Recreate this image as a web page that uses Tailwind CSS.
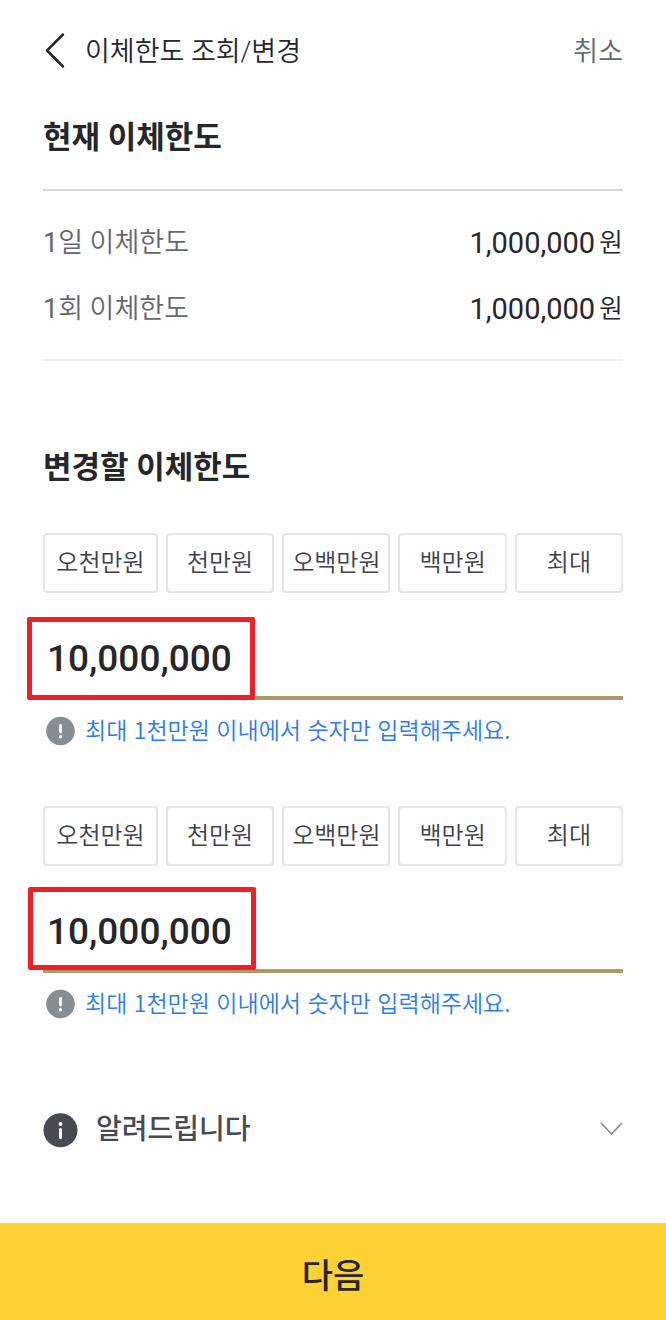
<!DOCTYPE html>
<html lang="ko">
<head>
  <meta charset="UTF-8">
  <meta name="viewport" content="width=device-width, initial-scale=1">
  <title>이체한도 조회/변경</title>
  <script src="https://cdn.jsdelivr.net/npm/@tailwindcss/browser@4"></script>
</head>
<body class="flex min-h-screen flex-col bg-[#fefefe] font-['Roboto','Noto_Sans_CJK_KR',sans-serif] text-[#26272b]">

  <header class="flex items-center justify-between px-[43px] pt-8">
    <div class="flex items-center gap-5">
      <button type="button" aria-label="뒤로">
        <svg class="h-10 w-[22px]" viewBox="0 0 22 40" fill="none" stroke="currentColor" stroke-width="2.500" stroke-linecap="round" stroke-linejoin="round"><path d="M20 2.500L4 18.500L20 34.500"/></svg>
      </button>
      <h1 class="text-[27px] leading-10 font-[350]">이체한도 조회/변경</h1>
    </div>
    <button type="button" class="text-[27px] leading-10 font-[350] text-[#65676f]">취소</button>
  </header>

  <main class="flex-1 px-[43px]">
    <section class="pt-[42px]">
      <h2 class="text-[31px] leading-12 font-bold">현재 이체한도</h2>
      <dl class="mt-[27px] flex flex-col gap-[30px] border-t-2 border-b-2 border-t-[#d5d8dd] border-b-[#efeff0] pt-[34px] pb-8">
        <div class="flex items-center justify-between">
          <dt class="text-[27px] leading-9 font-[350] text-[#65676f]"><span class="font-normal">1</span>일 이체한도</dt>
          <dd class="flex items-center gap-1 text-[29px] leading-9">1,000,000<span class="text-[26px] font-[350]">원</span></dd>
        </div>
        <div class="flex items-center justify-between">
          <dt class="text-[27px] leading-9 font-[350] text-[#65676f]"><span class="font-normal">1</span>회 이체한도</dt>
          <dd class="flex items-center gap-1 text-[29px] leading-9">1,000,000<span class="text-[26px] font-[350]">원</span></dd>
        </div>
      </dl>
    </section>

    <section class="pt-[83px]">
      <h2 class="text-[31px] leading-12 font-bold">변경할 이체한도</h2>

      <!-- 1일 한도 -->
      <div class="mt-[41px]">
        <div class="flex gap-2 text-[24px] font-[350] text-[#404148]">
          <button type="button" class="h-15 flex-[116] rounded border-2 border-[#e3e5e9]">오천만원</button>
          <button type="button" class="h-15 flex-[109] rounded border-2 border-[#e3e5e9]">천만원</button>
          <button type="button" class="h-15 flex-[109] rounded border-2 border-[#e3e5e9]">오백만원</button>
          <button type="button" class="h-15 flex-[109] rounded border-2 border-[#e3e5e9]">백만원</button>
          <button type="button" class="h-15 flex-[109] rounded border-2 border-[#e3e5e9]">최대</button>
        </div>
        <div class="relative mt-6">
          <input type="text" inputmode="numeric" aria-label="1일 이체한도" value="10,000,000" class="block h-[83px] w-full border-b-4 border-[#ad986b] pt-1 pl-1 text-[37px] font-medium outline-none">
          <div class="pointer-events-none absolute bottom-0 -left-4 h-[83px] w-[228px] rounded-xs border-5 border-[#f01f26]"></div>
        </div>
        <p class="mt-[13px] flex items-start gap-[10px] pb-[3px] pl-[2px] font-['Noto_Sans_CJK_KR',sans-serif] text-[23px] leading-8 font-[350] text-[#2c7bf0]">
          <svg class="mt-[3px] size-[30px]" viewBox="0 0 30 30"><circle cx="15.500" cy="15" r="14.300" fill="#858d95"/><path d="M15.500 9.500V16" stroke="#fff" stroke-width="2.800" stroke-linecap="round"/><circle cx="15.500" cy="20.800" r="1.700" fill="#fff"/></svg>
          최대 1천만원 이내에서 숫자만 입력해주세요.
        </p>
      </div>

      <!-- 1회 한도 -->
      <div class="mt-[57px]">
        <div class="flex gap-2 text-[24px] font-[350] text-[#404148]">
          <button type="button" class="h-15 flex-[116] rounded border-2 border-[#e3e5e9]">오천만원</button>
          <button type="button" class="h-15 flex-[109] rounded border-2 border-[#e3e5e9]">천만원</button>
          <button type="button" class="h-15 flex-[109] rounded border-2 border-[#e3e5e9]">오백만원</button>
          <button type="button" class="h-15 flex-[109] rounded border-2 border-[#e3e5e9]">백만원</button>
          <button type="button" class="h-15 flex-[109] rounded border-2 border-[#e3e5e9]">최대</button>
        </div>
        <div class="relative mt-6">
          <input type="text" inputmode="numeric" aria-label="1회 이체한도" value="10,000,000" class="block h-[83px] w-full border-b-4 border-[#ad986b] pt-1 pl-1 text-[37px] font-medium outline-none">
          <div class="pointer-events-none absolute bottom-[3px] -left-[15px] h-[83px] w-[228px] rounded-xs border-5 border-[#f01f26]"></div>
        </div>
        <p class="mt-[13px] flex items-start gap-[10px] pb-[3px] pl-[2px] font-['Noto_Sans_CJK_KR',sans-serif] text-[23px] leading-8 font-[350] text-[#2c7bf0]">
          <svg class="mt-[3px] size-[30px]" viewBox="0 0 30 30"><circle cx="15.500" cy="15" r="14.300" fill="#858d95"/><path d="M15.500 9.500V16" stroke="#fff" stroke-width="2.800" stroke-linecap="round"/><circle cx="15.500" cy="20.800" r="1.700" fill="#fff"/></svg>
          최대 1천만원 이내에서 숫자만 입력해주세요.
        </p>
      </div>
    </section>

    <button type="button" aria-expanded="false" class="mt-[88px] mb-[70px] flex w-full items-center justify-between">
      <span class="flex items-center gap-[18px] text-[28px] leading-10 font-medium text-[#484a52]">
        <svg class="size-[35px]" viewBox="0 0 35 35"><circle cx="17.500" cy="17.300" r="17" fill="#484a52"/><circle cx="17.500" cy="11" r="1.900" fill="#fff"/><path d="M17.500 16.500V24.500" stroke="#fff" stroke-width="3" stroke-linecap="round"/></svg>
        알려드립니다
      </span>
      <svg class="h-4 w-[23px]" viewBox="0 0 23 16" fill="none" stroke="#8d9097" stroke-width="1.800"><path d="M1 1L11.500 12L22 1"/></svg>
    </button>
  </main>

  <button type="button" class="h-[97px] w-full bg-[#fed235] pt-[10px] text-[34px] font-medium">다음</button>

</body>
</html>
